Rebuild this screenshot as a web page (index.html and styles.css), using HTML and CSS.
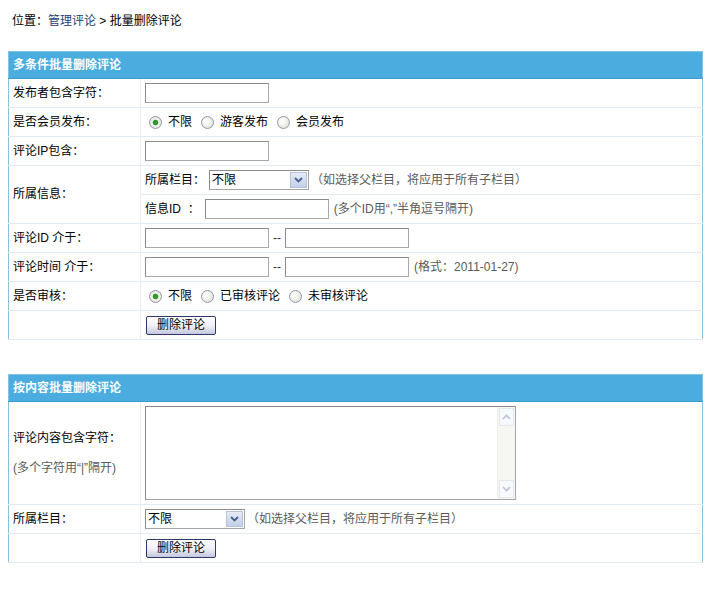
FILE: index.html
```html
<!DOCTYPE html>
<html lang="zh-CN">
<head>
<meta charset="utf-8">
<title>批量删除评论</title>
<link rel="stylesheet" href="styles.css">
</head>
<body>
<div class="crumb">位置：<a href="#" class="crumb-link">管理评论</a> &gt; 批量删除评论</div>

<table class="panel">
  <tr><th colspan="2" class="panel-title">多条件批量删除评论</th></tr>
  <tr>
    <td class="lbl">发布者包含字符：</td>
    <td class="val"><input class="txt" type="text"></td>
  </tr>
  <tr>
    <td class="lbl">是否会员发布：</td>
    <td class="val">
      <div class="opts">
        <label class="opt"><input type="radio" name="member" class="rad" checked>不限</label>
        <label class="opt"><input type="radio" name="member" class="rad">游客发布</label>
        <label class="opt"><input type="radio" name="member" class="rad">会员发布</label>
      </div>
    </td>
  </tr>
  <tr>
    <td class="lbl">评论IP包含：</td>
    <td class="val"><input class="txt" type="text"></td>
  </tr>
  <tr>
    <td class="lbl" rowspan="2">所属信息：</td>
    <td class="val">
      <div class="line">
        <span>所属栏目：</span>
        <span class="sel">
          <select class="sel-box"><option>不限</option></select>
          <span class="sel-btn"><svg width="9" height="6" viewBox="0 0 9 6"><path d="M1 1 L4.5 4.5 L8 1" fill="none" stroke="#4a5f8c" stroke-width="1.8"/></svg></span>
        </span>
        <span class="hint hint-gap">（如选择父栏目，将应用于所有子栏目）</span>
      </div>
    </td>
  </tr>
  <tr>
    <td class="val">
      <div class="line">
        <span class="id-lbl">信息ID&nbsp;&nbsp;：</span>
        <input class="txt" type="text">
        <span class="hint hint-small">(多个ID用“,”半角逗号隔开)</span>
      </div>
    </td>
  </tr>
  <tr>
    <td class="lbl">评论ID 介于：</td>
    <td class="val">
      <div class="line">
        <input class="txt" type="text"><span class="dash">--</span><input class="txt" type="text">
      </div>
    </td>
  </tr>
  <tr>
    <td class="lbl">评论时间 介于：</td>
    <td class="val">
      <div class="line">
        <input class="txt" type="text"><span class="dash">--</span><input class="txt" type="text">
        <span class="hint hint-small">(格式：2011-01-27)</span>
      </div>
    </td>
  </tr>
  <tr>
    <td class="lbl">是否审核：</td>
    <td class="val">
      <div class="opts">
        <label class="opt"><input type="radio" name="audit" class="rad" checked>不限</label>
        <label class="opt"><input type="radio" name="audit" class="rad">已审核评论</label>
        <label class="opt"><input type="radio" name="audit" class="rad">未审核评论</label>
      </div>
    </td>
  </tr>
  <tr>
    <td class="lbl"></td>
    <td class="val"><button class="btn" type="button">删除评论</button></td>
  </tr>
</table>

<table class="panel panel-second">
  <tr><th colspan="2" class="panel-title">按内容批量删除评论</th></tr>
  <tr>
    <td class="lbl">评论内容包含字符：<br><br><span class="hint">(多个字符用“|”隔开)</span></td>
    <td class="val">
      <div class="area">
        <textarea class="area-box"></textarea>
        <div class="scroll">
          <span class="scroll-btn"><svg width="9" height="6" viewBox="0 0 9 6"><path d="M1 5 L4.5 1.5 L8 5" fill="none" stroke="#b7c3d6" stroke-width="1.6"/></svg></span>
          <span class="scroll-track"></span>
          <span class="scroll-btn"><svg width="9" height="6" viewBox="0 0 9 6"><path d="M1 1 L4.5 4.5 L8 1" fill="none" stroke="#b7c3d6" stroke-width="1.6"/></svg></span>
        </div>
      </div>
    </td>
  </tr>
  <tr>
    <td class="lbl">所属栏目：</td>
    <td class="val">
      <div class="line">
        <span class="sel sel-first">
          <select class="sel-box"><option>不限</option></select>
          <span class="sel-btn"><svg width="9" height="6" viewBox="0 0 9 6"><path d="M1 1 L4.5 4.5 L8 1" fill="none" stroke="#4a5f8c" stroke-width="1.8"/></svg></span>
        </span>
        <span class="hint hint-gap">（如选择父栏目，将应用于所有子栏目）</span>
      </div>
    </td>
  </tr>
  <tr>
    <td class="lbl"></td>
    <td class="val"><button class="btn" type="button">删除评论</button></td>
  </tr>
</table>
</body>
</html>
```

FILE: styles.css
```css
html, body {
  background: #ffffff;
}
body {
  margin: 8px;
  font-family: "Liberation Sans", "Noto Sans CJK SC", sans-serif;
  font-size: 12px;
  line-height: 15px;
  color: #000;
}
.crumb {
  padding: 6px 4px 0;
  margin-bottom: 22px;
}
.crumb-link {
  color: #1b3f73;
  text-decoration: none;
}
.panel {
  width: 695px;
  border-collapse: collapse;
  border: 1px solid #86c1df;
}
.panel-second {
  margin-top: 34px;
}
.panel-title {
  height: 26px;
  padding: 0 4px;
  text-align: left;
  background: #4aacdf;
  border-bottom: 1px solid #3f9acc;
  color: #fff;
  font-weight: bold;
  line-height: 26px;
}
.lbl {
  width: 123px;
  padding: 4px;
  border-bottom: 1px solid #e1ebf1;
  border-right: 1px solid #e6eef3;
  vertical-align: middle;
  white-space: nowrap;
}
.val {
  padding: 4px;
  border-bottom: 1px solid #e1ebf1;
  vertical-align: middle;
  height: 20px;
}
.line {
  display: flex;
  align-items: center;
  height: 20px;
}
.txt {
  box-sizing: border-box;
  width: 124px;
  height: 20px;
  margin: 0;
  padding: 1px 3px;
  border: 1px solid #a9a9a9;
  border-top-color: #8a8a8a;
  border-left-color: #8a8a8a;
  font: inherit;
  background: #fff;
}
.dash {
  margin: 0 4px;
  color: #333;
}
.hint {
  color: #5a5a5a;
}
.hint-gap {
  margin-left: 2px;
}
.hint-small {
  margin-left: 5px;
}
.id-lbl {
  margin-right: 5px;
}
.opts {
  display: flex;
  align-items: center;
  height: 20px;
}
.opt {
  display: inline-flex;
  align-items: center;
  margin-right: 5px;
}
.rad {
  appearance: none;
  -webkit-appearance: none;
  box-sizing: border-box;
  width: 13px;
  height: 13px;
  margin: 0 6px 0 4px;
  border: 1px solid #8f9aa6;
  border-radius: 50%;
  background: radial-gradient(circle at 40% 40%, #ffffff 0, #f3f3ee 40%, #d6d5cc 100%);
}
.rad:checked {
  background: radial-gradient(circle, #36a52e 0, #2f8f2a 2.2px, #e9f2e5 3.2px, #f3f3ee 45%, #d6d5cc 100%);
}
.sel {
  display: inline-flex;
  align-items: stretch;
  box-sizing: border-box;
  width: 100px;
  height: 20px;
  margin-left: 4px;
  border: 1px solid #a5a5a5;
  border-top-color: #8a8a8a;
  border-left-color: #8a8a8a;
  background: #fff;
}
.sel-first {
  margin-left: 0;
}
.sel-box {
  flex: 1;
  min-width: 0;
  appearance: none;
  -webkit-appearance: none;
  border: 0;
  margin: 0;
  padding: 0 2px;
  background: transparent;
  font: inherit;
  color: #000;
}
.sel-btn {
  display: flex;
  align-items: center;
  justify-content: center;
  box-sizing: border-box;
  width: 17px;
  margin: 1px;
  border: 1px solid #b4c2dc;
  background: linear-gradient(#e6ebf7, #c3cfe8);
}
.area {
  display: flex;
  box-sizing: border-box;
  width: 371px;
  height: 94px;
  border: 1px solid #a5a5a5;
  border-top-color: #8a8a8a;
  border-left-color: #8a8a8a;
  background: #fff;
}
.area-box {
  flex: 1;
  border: 0;
  margin: 0;
  padding: 2px;
  resize: none;
  font: inherit;
  outline: none;
}
.scroll {
  display: flex;
  flex-direction: column;
  width: 17px;
  background: #f6f6f3;
  border-left: 1px solid #eeeeea;
}
.scroll-btn {
  display: flex;
  align-items: center;
  justify-content: center;
  height: 16px;
  margin: 1px;
  border: 1px solid #e3e8f0;
  background: #f7f9fc;
}
.scroll-track {
  flex: 1;
}
.btn {
  box-sizing: border-box;
  width: 70px;
  height: 19px;
  margin: 0 0 0 1px;
  padding: 0;
  border: 1px solid #2b3a6a;
  border-radius: 2px;
  background: linear-gradient(#ffffff, #eeeef5 55%, #c4c6df);
  font: inherit;
  line-height: 17px;
  color: #000;
}
```
